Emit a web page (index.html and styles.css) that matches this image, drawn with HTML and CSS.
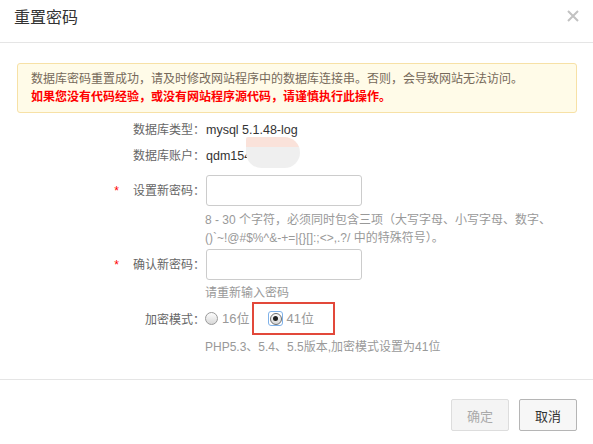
FILE: index.html
```html
<!DOCTYPE html>
<html lang="zh-CN">
<head>
<meta charset="utf-8">
<title>重置密码</title>
<link rel="stylesheet" href="styles.css">
</head>
<body>
<div class="dialog">
  <div class="header">
    <h1 class="title">重置密码</h1>
    <span class="close"><svg width="12" height="12" viewBox="0 0 12 12"><path d="M1 1 L11 11 M11 1 L1 11" stroke="#c2c2c2" stroke-width="2" fill="none"/></svg></span>
  </div>
  <div class="body">
    <div class="notice">
      <p class="notice-info">数据库密码重置成功，请及时修改网站程序中的数据库连接串。否则，会导致网站无法访问。</p>
      <p class="notice-warn">如果您没有代码经验，或没有网站程序源代码，请谨慎执行此操作。</p>
    </div>
    <div class="form">
      <div class="row row-info1">
        <div class="label">数据库类型：</div>
        <div class="value">mysql 5.1.48-log</div>
      </div>
      <div class="row row-info2">
        <div class="label">数据库账户：</div>
        <div class="value">qdm154</div>
      </div>
      <div class="row row-pass1">
        <div class="label"><span class="star">*</span>设置新密码：</div>
        <div class="field"><input class="input" type="password"></div>
      </div>
      <div class="hint hint-pass1">8 - 30 个字符，必须同时包含三项（大写字母、小写字母、数字、<br>()`~!@#$%^&amp;-+=|{}[]:;&lt;&gt;,.?/ 中的特殊符号）。</div>
      <div class="row row-pass2">
        <div class="label"><span class="star">*</span>确认新密码：</div>
        <div class="field"><input class="input" type="password"></div>
      </div>
      <div class="hint hint-pass2">请重新输入密码</div>
      <div class="row row-mode">
        <div class="label">加密模式：</div>
        <div class="options">
          <span class="option"><span class="radio"></span><span class="opt-text">16位</span></span>
          <span class="option option-marked"><span class="radio-focus"><span class="radio radio-checked"></span></span><span class="opt-text">41位</span></span>
        </div>
      </div>
      <div class="hint hint-mode">PHP5.3、5.4、5.5版本,加密模式设置为41位</div>
    </div>
    <div class="blur-mask"></div>
  </div>
  <div class="footer">
    <button class="btn btn-disabled" type="button">确定</button>
    <button class="btn" type="button">取消</button>
  </div>
</div>
</body>
</html>
```

FILE: styles.css
```css
* {
  box-sizing: border-box;
}

html, body {
  margin: 0;
  padding: 0;
  background: #ffffff;
}

body {
  font-family: "Liberation Sans", "Noto Sans CJK SC", sans-serif;
  font-size: 12px;
  color: #333333;
}

.dialog {
  width: 593px;
  height: 444px;
  background: #ffffff;
  overflow: hidden;
}

.header {
  height: 43px;
  border-bottom: 1px solid #e5e5e5;
  display: flex;
  justify-content: space-between;
  align-items: flex-start;
  padding: 7px 14px 0 14px;
}

.title {
  margin: 0;
  font-size: 16px;
  font-weight: normal;
  line-height: 22px;
  color: #333333;
}

.close {
  display: block;
  width: 12px;
  height: 12px;
  margin-top: 3px;
}

.close svg {
  display: block;
}

.body {
  position: relative;
  height: 336px;
  padding: 20px 16px 0 17px;
}

.notice {
  height: 50px;
  background: #fffbe8;
  border: 1px solid #f7e1a6;
  border-radius: 3px;
  padding: 6px 13px;
}

.notice p {
  margin: 0;
  line-height: 18px;
  white-space: nowrap;
}

.notice-info {
  color: #76695a;
}

.notice-warn {
  color: #ff0000;
  font-weight: bold;
}

.form {
  display: flex;
  flex-direction: column;
  margin-left: -17px;
}

.row {
  display: flex;
  align-items: center;
}

.label {
  width: 205px;
  flex: none;
  text-align: right;
  color: #666666;
  line-height: 20px;
  position: relative;
}

.star {
  color: #ff0000;
  margin-right: 14px;
}

.value {
  line-height: 20px;
  color: #333333;
  padding-left: 1px;
  font-size: 12.5px;
}

.row-info1 {
  margin-top: 7px;
}

.row-info2 {
  margin-top: 6px;
}

.row-pass1 {
  margin-top: 9px;
}

.row-pass2 {
  margin-top: 2px;
}

.field {
  padding-left: 1px;
}

.input {
  display: block;
  width: 156px;
  height: 31px;
  margin: 0;
  border: 1px solid #cccccc;
  border-radius: 3px;
  background: #ffffff;
  outline: none;
}

.hint {
  margin-left: 205px;
  color: #999999;
  line-height: 18px;
}

.hint-pass1 {
  margin-top: 5px;
  white-space: nowrap;
}

.hint-pass2 {
  margin-top: 5px;
  line-height: 17px;
}

.row-mode .label {
  padding-top: 3px;
}

.options {
  display: flex;
  align-items: center;
}

.option {
  display: flex;
  align-items: center;
  color: #999999;
  font-size: 13px;
}

.opt-text {
  line-height: 20px;
}

.radio {
  display: inline-block;
  width: 13px;
  height: 13px;
  border-radius: 50%;
  border: 1px solid #9a9a9a;
  background: linear-gradient(#fdfdfd, #d8d8d8);
  margin-right: 4px;
  position: relative;
}

.radio-focus {
  display: inline-flex;
  align-items: center;
  justify-content: center;
  width: 15px;
  height: 15px;
  border: 1px solid #7fb2ea;
  border-radius: 3px;
  margin-right: 3px;
}

.radio-focus .radio {
  margin: 0;
  width: 12px;
  height: 12px;
  border-color: #6e6e6e;
}

.radio-checked::after {
  content: "";
  position: absolute;
  left: 2.5px;
  top: 2.5px;
  width: 5px;
  height: 5px;
  border-radius: 50%;
  background: #222222;
}

.option-marked {
  margin-left: 3px;
  height: 33px;
  border: 2px solid #e2483a;
  padding: 0 19px 0 14px;
}

.hint-mode {
  margin-top: 3px;
}

.blur-mask {
  position: absolute;
  left: 246px;
  top: 94px;
  width: 54px;
  height: 31px;
  border-radius: 2px 16px 16px 16px;
  background: linear-gradient(#fae2da 0, #fae2da 10px, #efefef 10px, #efefef 100%);
}

.footer {
  height: 65px;
  border-top: 1px solid #e5e5e5;
  display: flex;
  justify-content: flex-end;
  align-items: flex-start;
  gap: 10px;
  padding: 19px 16px 0 0;
}

.btn {
  width: 58px;
  height: 32px;
  margin: 0;
  font-family: "Liberation Sans", "Noto Sans CJK SC", sans-serif;
  font-size: 13px;
  color: #333333;
  background: #f7f7f7;
  border: 1px solid #b5b5b5;
  border-radius: 2px;
  padding: 0;
}

.btn-disabled {
  color: #aaaaaa;
  background: #f4f4f4;
  border-color: #dddddd;
}
```
